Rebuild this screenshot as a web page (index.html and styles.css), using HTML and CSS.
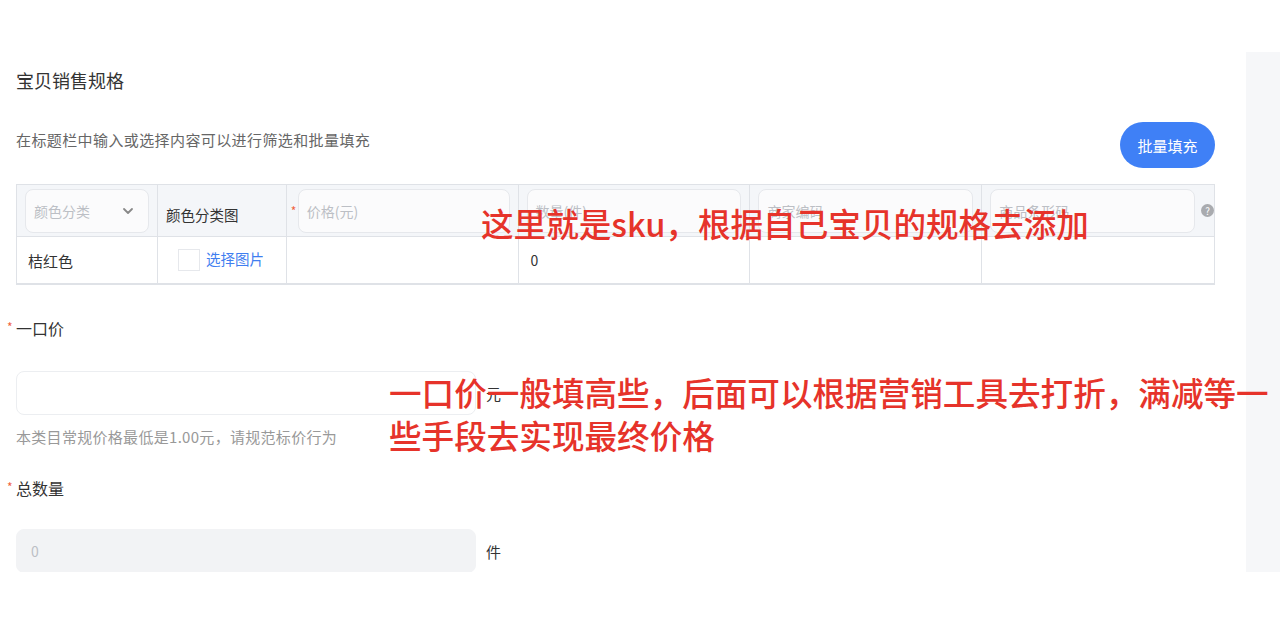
FILE: index.html
```html
<!DOCTYPE html>
<html lang="zh-CN">
<head>
<meta charset="utf-8">
<title>宝贝销售规格</title>
<link rel="stylesheet" href="styles.css">
</head>
<body>
<div class="frame">
  <main class="main">
    <h2 class="title">宝贝销售规格</h2>
    <div class="tool-row">
      <p class="desc">在标题栏中输入或选择内容可以进行筛选和批量填充</p>
      <button class="btn-primary">批量填充</button>
    </div>
    <div class="sku-table">
      <div class="tr thead">
        <div class="td c1">
          <div class="field select"><span class="ph">颜色分类</span>
            <svg class="chev" width="12" height="8" viewBox="0 0 12 8"><path d="M2 2l4 4 4-4" fill="none" stroke="#888" stroke-width="1.8" stroke-linecap="round" stroke-linejoin="round"/></svg>
          </div>
        </div>
        <div class="td c2"><span class="head-text">颜色分类图</span></div>
        <div class="td c3 star-cell"><span class="req">*</span><div class="field"><span class="ph">价格(元)</span></div></div>
        <div class="td c3"><div class="field"><span class="ph">数量(件)</span></div></div>
        <div class="td c3"><div class="field"><span class="ph">商家编码</span></div></div>
        <div class="td c3 last"><div class="field"><span class="ph">商品条形码</span></div><span class="qicon">?</span></div>
      </div>
      <div class="tr tbody">
        <div class="td c1"><span class="cell-text first">桔红色</span></div>
        <div class="td c2"><span class="thumb"></span><a class="link">选择图片</a></div>
        <div class="td c3"></div>
        <div class="td c3"><span class="cell-text num">0</span></div>
        <div class="td c3"></div>
        <div class="td c3 last"></div>
      </div>
    </div>

    <div class="form-label"><span class="req">*</span>一口价</div>
    <div class="input-row">
      <div class="input"></div><span class="unit">元</span>
    </div>
    <p class="help">本类目常规价格最低是1.00元，请规范标价行为</p>

    <div class="form-label second"><span class="req">*</span>总数量</div>
    <div class="input-row low">
      <div class="input disabled"><span class="ph">0</span></div><span class="unit">件</span>
    </div>
  </main>
  <aside class="side"></aside>

  <div class="note note-sku">这里就是sku，根据自己宝贝的规格去添加</div>
  <div class="note note-price">一口价一般填高些，后面可以根据营销工具去打折，满减等一<br>些手段去实现最终价格</div>
</div>
</body>
</html>
```

FILE: styles.css
```css
* { box-sizing: border-box; }
html, body { margin: 0; padding: 0; background: #fff; }
body {
  font-family: "Noto Sans CJK SC", "Noto Sans", sans-serif;
  color: #333;
  width: 1280px;
  height: 640px;
  overflow: hidden;
}
.frame {
  position: relative;
  margin-top: 52px;
  height: 520px;
  display: flex;
  overflow: visible;
}
.main {
  width: 1246px;
  height: 520px;
  overflow: hidden;
  padding: 16px 31px 0 16px;
  background: #fff;
}
.side {
  flex: 1;
  background: #f6f7f9;
}
.title {
  margin: 0;
  font-size: 18px;
  line-height: 24px;
  font-weight: 400;
  color: #333;
}
.tool-row {
  margin-top: 30px;
  height: 46px;
  display: flex;
  justify-content: space-between;
  align-items: center;
}
.desc {
  margin: 0 0 10px 0;
  font-size: 15px;
  line-height: 20px;
  letter-spacing: 0.4px;
  color: #666;
}
.btn-primary {
  width: 95px;
  height: 46px;
  border: none;
  border-radius: 23px;
  background: #3f80f6;
  color: #fff;
  font-family: inherit;
  font-size: 15px;
  padding: 0;
}
.sku-table {
  margin-top: 16px;
  border: 1px solid #dfe2e7;
  border-bottom-width: 2px;
}
.tr { display: flex; }
.thead { height: 52px; background: #f4f6f9; border-bottom: 1px solid #dfe2e7; }
.tbody { height: 46px; background: #fff; }
.td {
  display: flex;
  align-items: center;
  border-right: 1px solid #dfe2e7;
  padding: 0 8px 0 8px;
}
.td.last { border-right: none; }
.c1 { width: 141px; }
.c2 { width: 129px; }
.c3 { width: 232px; }
.td.last { width: 232px; padding-right: 0; }
.field {
  flex: 1;
  height: 44px;
  background: #fbfbfc;
  border: 1px solid #e6e8ec;
  border-radius: 8px;
  display: flex;
  align-items: center;
  padding: 0 8px;
}
.select { justify-content: space-between; padding-right: 14px; }
.ph { color: #bcbfc5; font-size: 14px; }
.head-text { font-size: 14.5px; color: #333; margin-top: 8px; }
.star-cell { padding-left: 4px; }
.req { color: #f0623e; font-size: 12px; width: 6px; display: inline-block; }
.star-cell .req { margin-right: 1px; }
.qicon {
  width: 13px;
  height: 13px;
  margin-left: 6px;
  border-radius: 50%;
  background: #a9abaf;
  color: #fff;
  font-size: 10px;
  line-height: 13px;
  text-align: center;
  flex: none;
}
.cell-text { font-size: 15px; color: #333; }
.cell-text.first { margin-left: 3px; }
.cell-text.num { margin-left: 4px; font-size: 14px; }
.thumb {
  width: 22px;
  height: 22px;
  border: 1px solid #e6e8ec;
  margin-left: 12px;
  margin-right: 6px;
  background: #fff;
}
.link { color: #3f7ef0; font-size: 14.5px; margin-top: -4px; }
.form-label {
  margin-top: 31px;
  margin-left: -10px;
  font-size: 16px;
  line-height: 22px;
  color: #333;
}
.form-label .req { width: 10px; padding-left: 1px; vertical-align: 3px; }
.form-label.second { margin-top: 29px; }
.input-row {
  margin-top: 32px;
  display: flex;
  align-items: center;
}
.input-row.low { margin-top: 30px; }
.input {
  width: 460px;
  height: 44px;
  border: 1px solid #eceef1;
  border-radius: 8px;
  background: #fff;
  display: flex;
  align-items: center;
  padding: 0 14px;
}
.input.disabled { background: #f2f3f5; border-color: #f2f3f5; }
.unit { margin-left: 10px; font-size: 15px; color: #333; }
.help {
  margin: 12px 0 0 0;
  font-size: 15px;
  line-height: 20px;
  letter-spacing: 0.3px;
  color: #999;
}
.note {
  position: absolute;
  color: #e6332a;
  font-size: 32.6px;
  line-height: 43px;
  font-weight: 500;
  white-space: nowrap;
}
.note-sku { left: 481px; top: 149px; }
.note-price { left: 389px; top: 318px; }
```
